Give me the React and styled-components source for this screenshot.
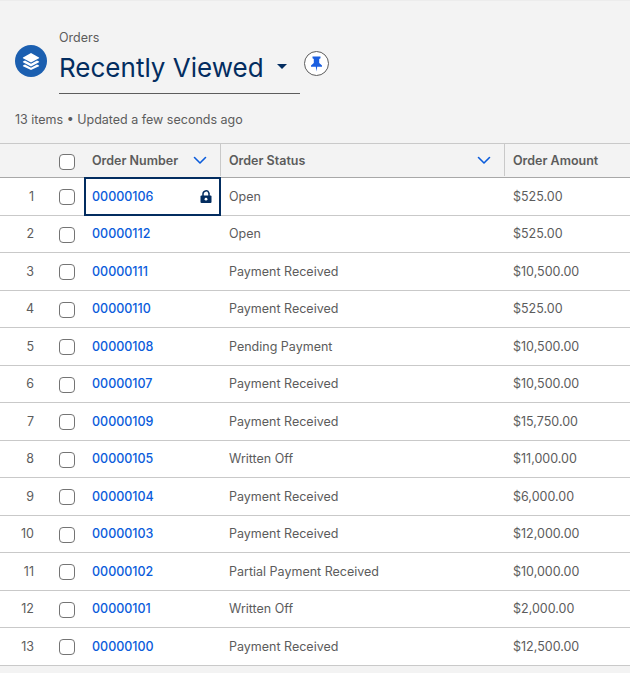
import styled, { createGlobalStyle } from 'styled-components';

const GlobalStyle = createGlobalStyle`
  html, body {
    margin: 0;
    padding: 0;
    height: 100%;
    overflow: hidden;
    background-color: #f3f3f3;
    font-family: Inter, 'Noto Sans', sans-serif;
  }
`;

const Page = styled.div`
  width: 630px;
  height: 673px;
  overflow: hidden;
  border-top: 1px solid #ececec;
  box-sizing: border-box;
  background-color: #f3f3f3;
`;

const Header = styled.div`
  height: 142px;
  padding: 29px 0 0 15px;
  box-sizing: border-box;
`;

const TitleRow = styled.div`
  display: flex;
  align-items: center;
`;

const ListIcon = styled.div`
  width: 32px;
  height: 32px;
  flex: none;
  margin-top: -2px;
  margin-right: 12px;
  border-radius: 50%;
  background-color: #1b5fb0;
  display: flex;
  align-items: center;
  justify-content: center;
`;

const TitleBlock = styled.div`
  width: 241px;
  border-bottom: 1px solid #5c5c5c;
`;

const ObjectName = styled.div`
  font-size: 12.5px;
  line-height: 16px;
  color: #5c5c5c;
`;

const ViewName = styled.div`
  display: flex;
  align-items: center;
  height: 47px;
  padding-bottom: 4px;
  box-sizing: border-box;
  font-size: 26px;
  color: #032d60;
  white-space: nowrap;
`;

const Caret = styled.span`
  width: 0;
  height: 0;
  margin-left: 13px;
  margin-top: -3px;
  border-left: 5px solid transparent;
  border-right: 5px solid transparent;
  border-top: 5px solid #032d60;
`;

const PinButton = styled.div`
  width: 23px;
  height: 23px;
  margin-left: 4px;
  margin-top: 3px;
  border: 1px solid #5c5c5c;
  border-radius: 50%;
  background-color: #ffffff;
  display: flex;
  align-items: center;
  justify-content: center;
`;

const Meta = styled.div`
  margin-top: 18px;
  font-size: 12.5px;
  line-height: 16px;
  color: #5c5c5c;
`;

const Row = styled.div`
  display: grid;
  grid-template-columns: 50px 34px 137px 284px 160px;
  width: 665px;
  height: ${(p) => (p.$head ? '35px' : '37.5px')};
  box-sizing: border-box;
  background-color: ${(p) => (p.$head ? '#f3f3f3' : '#ffffff')};
  border-top: ${(p) => (p.$head ? '1px solid #c9c9c9' : 'none')};
  border-bottom: 1px solid ${(p) => (p.$head ? '#a8a8a8' : '#c9c9c9')};
`;

const Cell = styled.div`
  display: flex;
  align-items: center;
  padding: 0 8px;
  font-size: 12.5px;
  color: #5c5c5c;
  white-space: nowrap;
`;

const IndexCell = styled(Cell)`
  justify-content: flex-end;
  padding: 0 16px 0 0;
  color: #5c5c5c;
`;

const CheckCell = styled(Cell)`
  justify-content: center;
  padding: 2px 0 0;
`;

const Check = styled.span`
  width: 16px;
  height: 16px;
  box-sizing: border-box;
  border: 1px solid #747474;
  border-radius: 4px;
  background-color: #ffffff;
`;

const HeadCell = styled(Cell)`
  justify-content: space-between;
  padding: 0 13px 0 8px;
  font-weight: 600;
  border-right: ${(p) => (p.$divider ? '1px solid #c9c9c9' : 'none')};
  margin: 0 0 1px;
`;

const NumberCell = styled(Cell)`
  justify-content: space-between;
  padding: ${(p) => (p.$focused ? '0 7px 0 6px' : '0 8px')};
  border: ${(p) => (p.$focused ? '2px solid #032d60' : 'none')};
  margin-top: ${(p) => (p.$focused ? '-1px' : '0')};
  margin-bottom: ${(p) => (p.$focused ? '-1px' : '0')};
`;

const OrderLink = styled.a`
  color: #0b5cdb;
  font-weight: 500;
  text-decoration: none;
`;

const Chevron = () => (
  <svg width="14" height="14" viewBox="0 0 14 14" fill="none" style={{ flex: 'none' }}>
    <path d="M1.5 4.5 L7 10 L12.5 4.5" stroke="#0b5cdb" strokeWidth="1.6" strokeLinecap="round" strokeLinejoin="round" />
  </svg>
);

const LockIcon = () => (
  <svg width="12" height="13" viewBox="0 0 12 13">
    <path d="M3 6V3.8a3 3 0 0 1 5.8-1" fill="none" stroke="#032d60" strokeWidth="1.5" strokeLinecap="round" />
    <path d="M9 3v3" stroke="#032d60" strokeWidth="1.5" />
    <rect x="0.5" y="5.5" width="11" height="7.5" rx="1" fill="#032d60" />
    <circle cx="6" cy="9.2" r="1.4" fill="#ffffff" />
  </svg>
);

const StackIcon = () => (
  <svg width="20" height="20" viewBox="0 0 20 20" fill="#ffffff">
    <path d="M10 2 L18 6.4 Q18.4 6.8 18 7.2 L10 11.4 L2 7.2 Q1.6 6.8 2 6.4 Z" />
    <path d="M4 9.4 L10 12.8 L16 9.4 L18 10.5 Q18.4 10.9 18 11.3 L10 15.4 L2 11.3 Q1.6 10.9 2 10.5 Z" />
    <path d="M4 13.4 L10 16.8 L16 13.4 L18 14.5 Q18.4 14.9 18 15.3 L10 19 L2 15.3 Q1.6 14.9 2 14.5 Z" />
  </svg>
);

const PinIcon = () => (
  <svg width="13" height="16" viewBox="0 0 13 16" fill="#1b5fe0">
    <path d="M2.5 0.5 H10.5 V2.2 L9.2 3 V7 L12 9.6 V10.8 H7.2 L6.5 15.5 L5.8 10.8 H1 V9.6 L3.8 7 V3 L2.5 2.2 Z" />
  </svg>
);

const orders = [
  ['00000106', 'Open', '$525.00'],
  ['00000112', 'Open', '$525.00'],
  ['00000111', 'Payment Received', '$10,500.00'],
  ['00000110', 'Payment Received', '$525.00'],
  ['00000108', 'Pending Payment', '$10,500.00'],
  ['00000107', 'Payment Received', '$10,500.00'],
  ['00000109', 'Payment Received', '$15,750.00'],
  ['00000105', 'Written Off', '$11,000.00'],
  ['00000104', 'Payment Received', '$6,000.00'],
  ['00000103', 'Payment Received', '$12,000.00'],
  ['00000102', 'Partial Payment Received', '$10,000.00'],
  ['00000101', 'Written Off', '$2,000.00'],
  ['00000100', 'Payment Received', '$12,500.00'],
];

const App = () => (
  <Page>
    <GlobalStyle />
    <Header>
      <TitleRow>
        <ListIcon>
          <StackIcon />
        </ListIcon>
        <TitleBlock>
          <ObjectName>Orders</ObjectName>
          <ViewName>
            Recently Viewed
            <Caret />
          </ViewName>
        </TitleBlock>
        <PinButton>
          <PinIcon />
        </PinButton>
      </TitleRow>
      <Meta>13 items • Updated a few seconds ago</Meta>
    </Header>
    <Row $head>
      <Cell />
      <CheckCell>
        <Check />
      </CheckCell>
      <HeadCell $divider>
        Order Number
        <Chevron />
      </HeadCell>
      <HeadCell $divider>
        Order Status
        <Chevron />
      </HeadCell>
      <HeadCell>
        Order Amount
        <Chevron />
      </HeadCell>
    </Row>
    {orders.map(([number, status, amount], i) => (
      <Row key={number}>
        <IndexCell>{i + 1}</IndexCell>
        <CheckCell>
          <Check />
        </CheckCell>
        <NumberCell $focused={i === 0}>
          <OrderLink>{number}</OrderLink>
          {i === 0 && <LockIcon />}
        </NumberCell>
        <Cell>{status}</Cell>
        <Cell>{amount}</Cell>
      </Row>
    ))}
  </Page>
);

export default App;
